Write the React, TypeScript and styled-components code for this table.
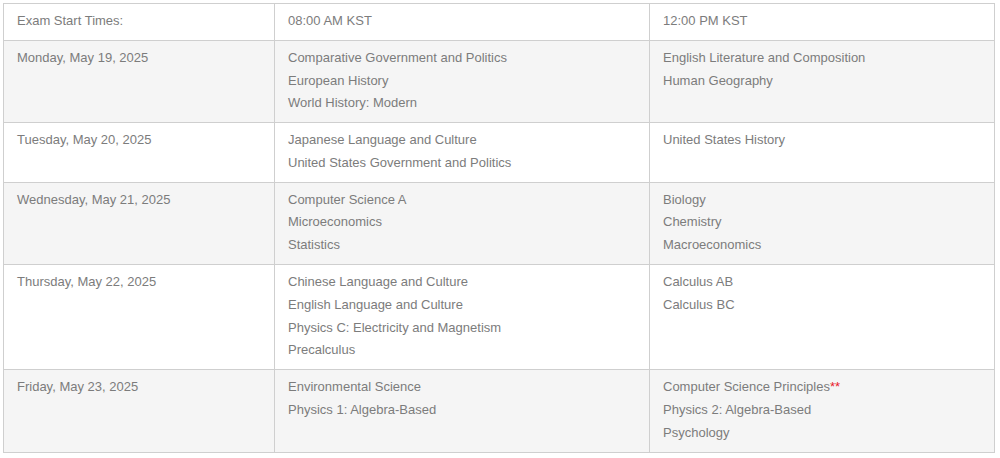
import React from 'react';
import styled, { createGlobalStyle } from 'styled-components';

const GlobalStyle = createGlobalStyle`
  body {
    margin: 0;
    background: #fff;
    font-family: "Liberation Sans", Arial, sans-serif;
  }
`;

const Wrapper = styled.div`
  padding: 3px;
`;

const Table = styled.table`
  width: 991px;
  border-collapse: collapse;
  table-layout: fixed;
  font-size: 13px;
  line-height: 22.78px;
  color: #7c7c7c;
`;

const Row = styled.tr<{ shaded: boolean }>`
  background: ${(props) => (props.shaded ? '#f5f5f5' : '#fff')};
`;

const Cell = styled.td`
  border: 1px solid #cfcfcf;
  padding: 6px 13px 7px;
  vertical-align: top;
`;

const Line = styled.div`
  white-space: nowrap;
`;

const Mark = styled.span`
  color: #e8202a;
`;

interface ExamDay {
  date: string;
  morning: string[];
  afternoon: React.ReactNode[];
}

const days: ExamDay[] = [
  {
    date: 'Monday, May 19, 2025',
    morning: ['Comparative Government and Politics', 'European History', 'World History: Modern'],
    afternoon: ['English Literature and Composition', 'Human Geography'],
  },
  {
    date: 'Tuesday, May 20, 2025',
    morning: ['Japanese Language and Culture', 'United States Government and Politics'],
    afternoon: ['United States History'],
  },
  {
    date: 'Wednesday, May 21, 2025',
    morning: ['Computer Science A', 'Microeconomics', 'Statistics'],
    afternoon: ['Biology', 'Chemistry', 'Macroeconomics'],
  },
  {
    date: 'Thursday, May 22, 2025',
    morning: [
      'Chinese Language and Culture',
      'English Language and Culture',
      'Physics C: Electricity and Magnetism',
      'Precalculus',
    ],
    afternoon: ['Calculus AB', 'Calculus BC'],
  },
  {
    date: 'Friday, May 23, 2025',
    morning: ['Environmental Science', 'Physics 1: Algebra-Based'],
    afternoon: [
      <>
        Computer Science Principles<Mark>**</Mark>
      </>,
      'Physics 2: Algebra-Based',
      'Psychology',
    ],
  },
];

export default function App(): React.ReactElement {
  return (
    <Wrapper>
      <GlobalStyle />
      <Table>
        <colgroup>
          <col style={{ width: 271 }} />
          <col style={{ width: 375 }} />
          <col style={{ width: 345 }} />
        </colgroup>
        <tbody>
          <Row shaded={false}>
            <Cell>Exam Start Times:</Cell>
            <Cell>08:00 AM KST</Cell>
            <Cell>12:00 PM KST</Cell>
          </Row>
          {days.map((day, i) => (
            <Row key={day.date} shaded={i % 2 === 0}>
              <Cell>{day.date}</Cell>
              <Cell>
                {day.morning.map((subject, j) => (
                  <Line key={j}>{subject}</Line>
                ))}
              </Cell>
              <Cell>
                {day.afternoon.map((subject, j) => (
                  <Line key={j}>{subject}</Line>
                ))}
              </Cell>
            </Row>
          ))}
        </tbody>
      </Table>
    </Wrapper>
  );
}
